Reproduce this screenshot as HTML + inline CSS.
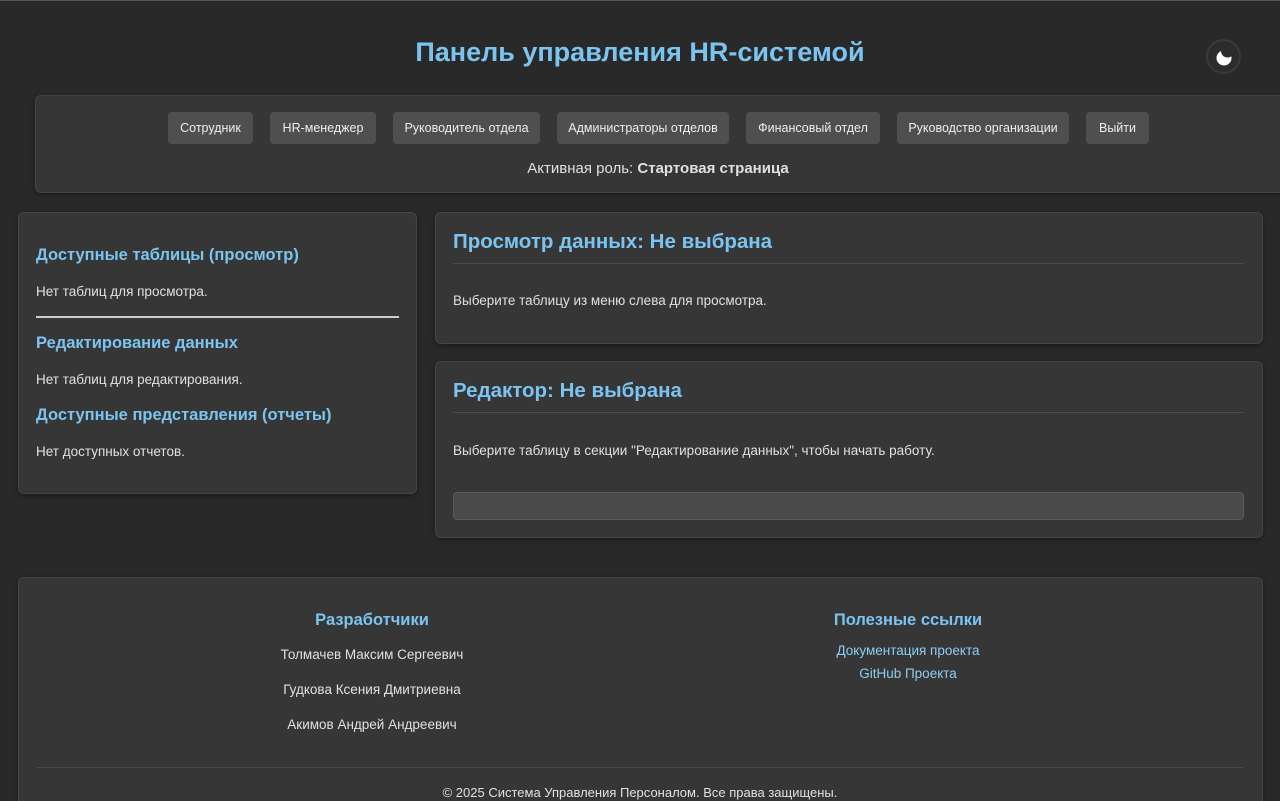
<!DOCTYPE html>
<html><head><meta charset="utf-8"><style>
*{box-sizing:border-box;margin:0;padding:0}
html,body{width:1280px;height:801px;overflow:hidden}
body{background:#292929;font-family:"Liberation Sans",sans-serif;color:#e0e0e0;position:relative}
.a{position:absolute}
h1{position:absolute;left:0;width:1280px;top:37px;text-align:center;font-size:27px;color:#7cc4f0;font-weight:bold}
.moon{left:1206px;top:39px;width:35px;height:35px;border-radius:50%;background:#2c2c2c;border:2px solid #3a3a3a}
.card{background:#363636;border:1px solid #444;border-radius:6px;box-shadow:0 2px 6px rgba(0,0,0,.35)}
.btn{position:absolute;top:112px;height:32px;background:#4f4f4f;border-radius:4px;font-size:12.5px;color:#eee;text-align:center;line-height:32px;white-space:nowrap}
.h3{position:absolute;left:36px;font-size:16.5px;font-weight:bold;color:#7cc4f0}
.t{position:absolute;font-size:13.5px;color:#e0e0e0}
.h2{position:absolute;left:453px;font-size:20.5px;font-weight:bold;color:#7cc4f0}
.ln{position:absolute;left:453px;width:791px;height:1px;background:#4c4c4c}
.fh{position:absolute;font-size:16.5px;font-weight:bold;color:#7cc4f0;text-align:center}
.fc{position:absolute;font-size:13.5px;text-align:center}
</style></head><body>
<div class="a" style="left:0;top:0;width:1280px;height:1px;background:#555"></div>
<h1>Панель управления HR-системой</h1>
<div class="a moon"><svg width="31" height="31" viewBox="0 0 31 31"><circle cx="16" cy="17" r="7.5" fill="#fff"/><circle cx="19.5" cy="10" r="6.5" fill="#2c2c2c"/></svg></div>
<div class="a card" style="left:35px;top:95px;width:1260px;height:98px"></div>
<div class="btn" style="left:168px;width:85px">Сотрудник</div>
<div class="btn" style="left:270px;width:106px">HR-менеджер</div>
<div class="btn" style="left:393px;width:147px">Руководитель отдела</div>
<div class="btn" style="left:557px;width:172px">Администраторы отделов</div>
<div class="btn" style="left:746px;width:134px">Финансовый отдел</div>
<div class="btn" style="left:897px;width:172px">Руководство организации</div>
<div class="btn" style="left:1086px;width:63px">Выйти</div>
<div class="t" style="left:0;width:1316px;text-align:center;top:160px;font-size:15px">Активная роль: <b>Стартовая страница</b></div>

<div class="a card" style="left:18px;top:212px;width:399px;height:282px"></div>
<div class="h3" style="top:246px">Доступные таблицы (просмотр)</div>
<div class="t" style="left:36px;top:284px">Нет таблиц для просмотра.</div>
<div class="a" style="left:36px;top:316px;width:363px;height:2px;background:#ccc"></div>
<div class="h3" style="top:334px">Редактирование данных</div>
<div class="t" style="left:36px;top:372px">Нет таблиц для редактирования.</div>
<div class="h3" style="top:406px">Доступные представления (отчеты)</div>
<div class="t" style="left:36px;top:444px">Нет доступных отчетов.</div>

<div class="a card" style="left:435px;top:212px;width:828px;height:132px"></div>
<div class="h2" style="top:230px">Просмотр данных: Не выбрана</div>
<div class="ln" style="top:263px"></div>
<div class="t" style="left:453px;top:293px">Выберите таблицу из меню слева для просмотра.</div>

<div class="a card" style="left:435px;top:361px;width:828px;height:177px"></div>
<div class="h2" style="top:379px">Редактор: Не выбрана</div>
<div class="ln" style="top:412px"></div>
<div class="t" style="left:453px;top:443px">Выберите таблицу в секции "Редактирование данных", чтобы начать работу.</div>
<div class="a" style="left:453px;top:492px;width:791px;height:28px;background:#4a4a4a;border:1px solid #5a5a5a;border-radius:4px"></div>

<div class="a card" style="left:18px;top:577px;width:1245px;height:240px"></div>
<div class="fh" style="left:172px;width:400px;top:611px">Разработчики</div>
<div class="fc" style="left:172px;width:400px;top:647px">Толмачев Максим Сергеевич</div>
<div class="fc" style="left:172px;width:400px;top:682px">Гудкова Ксения Дмитриевна</div>
<div class="fc" style="left:172px;width:400px;top:717px">Акимов Андрей Андреевич</div>
<div class="fh" style="left:708px;width:400px;top:611px">Полезные ссылки</div>
<div class="fc" style="left:708px;width:400px;top:643px;color:#8fcdf2">Документация проекта</div>
<div class="fc" style="left:708px;width:400px;top:666px;color:#8fcdf2">GitHub Проекта</div>
<div class="a" style="left:36px;top:767px;width:1208px;height:1px;background:#4a4a4a"></div>
<div class="fc" style="left:36px;width:1208px;top:785px;font-size:13px">© 2025 Система Управления Персоналом. Все права защищены.</div>
</body></html>
